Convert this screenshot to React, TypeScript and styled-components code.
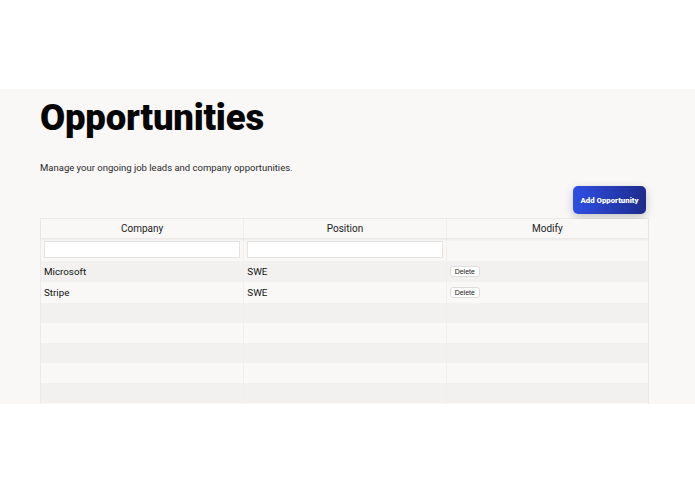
import React from "react";
import styled, { createGlobalStyle } from "styled-components";

const GlobalStyle = createGlobalStyle`
  body {
    margin: 0;
    background: #ffffff;
    font-family: Roboto, "Liberation Sans", sans-serif;
  }
`;

const TopSpace = styled.div`
  height: 89px;
  background: #ffffff;
`;

const Panel = styled.section`
  background: #f9f8f7;
  height: 315px;
  overflow: hidden;
  padding: 0 46px 0 40px;
`;

const Title = styled.h1`
  margin: 0;
  padding-top: 6px;
  font-size: 36.5px;
  line-height: 46px;
  font-weight: 900;
  color: #050505;
  letter-spacing: -0.2px;
`;

const Subtitle = styled.p`
  margin: 21px 0 0;
  font-size: 9.5px;
  font-weight: 400;
  color: #2a2a2a;
`;

const Actions = styled.div`
  display: flex;
  justify-content: flex-end;
  margin-top: 13px;
  padding-right: 3px;
`;

const AddButton = styled.button`
  width: 73px;
  height: 28px;
  padding: 0;
  border: none;
  border-radius: 5px;
  background: linear-gradient(90deg, #2e4fe4 0%, #1d2b8c 100%);
  color: #fff;
  font-family: Roboto, "Liberation Sans", sans-serif;
  font-size: 7.8px;
  font-weight: 900;
  box-shadow: 0 3px 10px rgba(0, 0, 0, 0.22);
  cursor: pointer;
`;

const Table = styled.div`
  margin-top: 4px;
  border: 1px solid #ebeae9;
  border-bottom: none;
`;

const Row = styled.div<{ $shade?: boolean; $height?: number }>`
  display: grid;
  grid-template-columns: 1fr 1fr 1fr;
  height: ${(p) => p.$height ?? 20}px;
  background: ${(p) => (p.$shade ? "#f2f1f0" : "#f9f8f7")};
`;

const HeadRow = styled(Row)`
  box-shadow: 0 2px 2px rgba(0, 0, 0, 0.06);
  position: relative;
`;

const HeadCell = styled.div`
  display: flex;
  align-items: center;
  justify-content: center;
  font-size: 10px;
  color: #222;
  border-left: 1px solid #efeeed;
  &:first-child {
    border-left: none;
  }
`;

const Cell = styled.div`
  display: flex;
  align-items: center;
  padding: 0 3px;
  font-size: 9.8px;
  color: #111;
  border-left: 1px solid #f0efee;
  &:first-child {
    border-left: none;
  }
`;

const FilterInput = styled.input`
  width: 100%;
  height: 17px;
  box-sizing: border-box;
  border: 1px solid #e4e3e2;
  background: #fff;
  outline: none;
`;

const DeleteButton = styled.button`
  height: 11px;
  padding: 0 4px;
  border: 1px solid #dedddc;
  border-radius: 3px;
  background: #fff;
  font-family: "Liberation Sans", sans-serif;
  font-size: 7px;
  color: #222;
  line-height: 9px;
`;

const rows = [
  { company: "Microsoft", position: "SWE" },
  { company: "Stripe", position: "SWE" },
];

export default function App() {
  return (
    <>
      <GlobalStyle />
      <TopSpace />
      <Panel>
        <Title>Opportunities</Title>
        <Subtitle>Manage your ongoing job leads and company opportunities.</Subtitle>
        <Actions>
          <AddButton>Add Opportunity</AddButton>
        </Actions>
        <Table>
          <HeadRow $height={19}>
            <HeadCell>Company</HeadCell>
            <HeadCell>Position</HeadCell>
            <HeadCell>Modify</HeadCell>
          </HeadRow>
          <Row $height={23}>
            <Cell>
              <FilterInput />
            </Cell>
            <Cell>
              <FilterInput />
            </Cell>
            <Cell />
          </Row>
          {rows.map((r, i) => (
            <Row key={r.company} $shade={i % 2 === 0} $height={21}>
              <Cell>{r.company}</Cell>
              <Cell>{r.position}</Cell>
              <Cell>
                <DeleteButton>Delete</DeleteButton>
              </Cell>
            </Row>
          ))}
          {[0, 1, 2, 3, 4, 5].map((i) => (
            <Row key={i} $shade={i % 2 === 0}>
              <Cell />
              <Cell />
              <Cell />
            </Row>
          ))}
        </Table>
      </Panel>
    </>
  );
}
